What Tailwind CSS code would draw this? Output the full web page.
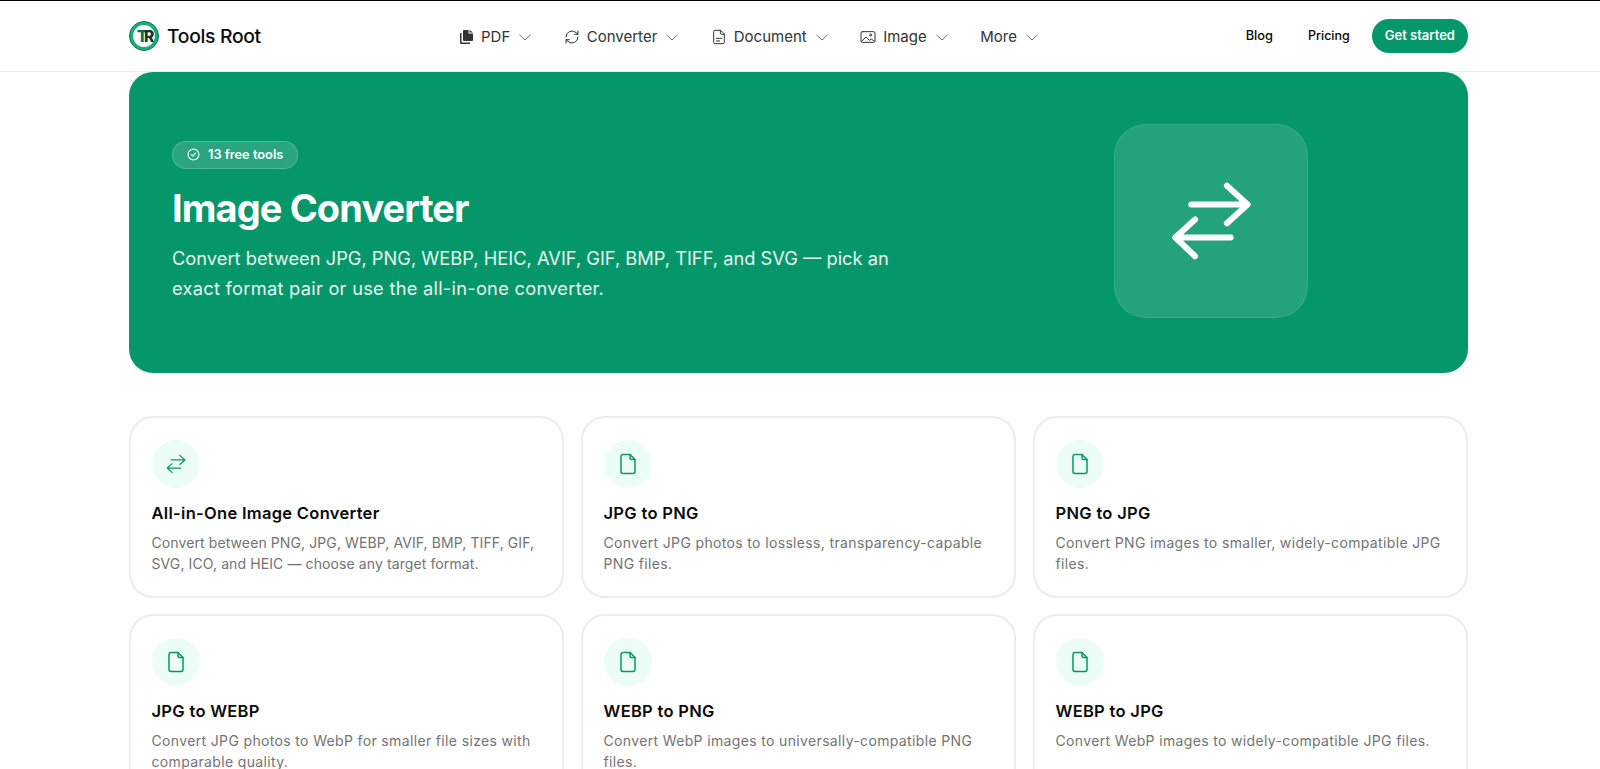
<!DOCTYPE html>
<html lang="en">
<head>
    <meta charset="UTF-8">
    <meta name="viewport" content="width=device-width, initial-scale=1.0">
    <title>Image Converter - Tools Root</title>
    <script src="https://cdn.jsdelivr.net/npm/@tailwindcss/browser@4"></script>
</head>
<body class="h-[769px] overflow-hidden bg-white font-['Inter',sans-serif] text-[#0a0a0a]">
    <header class="h-[72px] border-t border-b border-t-black border-b-[#ececec] pl-[129px] pr-[132px] flex items-center">
        <a class="flex items-center gap-[8px] w-[329px] shrink-0">
            <svg class="w-[30px] h-[30px]" viewBox="0 0 30 30">
                <circle cx="15" cy="15" r="12.600" fill="#fff" stroke="#16b07a" stroke-width="3.400"/>
                <circle cx="15" cy="15" r="14.500" fill="none" stroke="#0b6b4a" stroke-width="1"/>
                <text x="15" y="21" text-anchor="middle" font-family="Inter" font-weight="800" font-size="15.500" letter-spacing="-3.500"><tspan fill="#0f6b4c">T</tspan><tspan fill="#12352a">R</tspan></text>
            </svg>
            <span class="text-[19.300px] font-medium tracking-[-0.3px]">Tools Root</span>
        </a>
        <nav class="mt-[2px] flex items-center gap-[30.500px] text-[15px] text-[#333]">
            <a class="flex items-center gap-[7px]">
                <svg class="w-4 h-4" viewBox="0 0 16 16" fill="#333"><path d="M6 1h4.500v3.500H15V11a1 1 0 0 1-1 1H6a1 1 0 0 1-1-1V2a1 1 0 0 1 1-1z"/><path d="M11.500 1 15 3.500h-3.500z"/><path d="M2 4v9.500A1.500 1.500 0 0 0 3.500 15H12v-1.500H4a.5.5 0 0 1-.5-.5V4z"/></svg>
                <span>PDF</span>
                <svg class="w-4 h-4" viewBox="0 0 24 24" fill="none" stroke="#666" stroke-width="1.400" stroke-linecap="round" stroke-linejoin="round"><path d="m4 9 8 7.500L20 9"/></svg>
            </a>
            <a class="flex items-center gap-[7px]">
                <svg class="w-4 h-4" viewBox="0 0 24 24" fill="none" stroke="#333" stroke-width="1.500" stroke-linecap="round" stroke-linejoin="round"><path d="M3 12a9 9 0 0 1 15-6.700L21 8"/><path d="M21 3v5h-5"/><path d="M21 12a9 9 0 0 1-15 6.700L3 16"/><path d="M3 21v-5h5"/></svg>
                <span>Converter</span>
                <svg class="w-4 h-4" viewBox="0 0 24 24" fill="none" stroke="#666" stroke-width="1.400" stroke-linecap="round" stroke-linejoin="round"><path d="m4 9 8 7.500L20 9"/></svg>
            </a>
            <a class="flex items-center gap-[7px]">
                <svg class="w-4 h-4" viewBox="0 0 24 24" fill="none" stroke="#333" stroke-width="1.500" stroke-linecap="round" stroke-linejoin="round"><path d="M14 2H6a2 2 0 0 0-2 2v16a2 2 0 0 0 2 2h12a2 2 0 0 0 2-2V8z"/><path d="M14 2v4a2 2 0 0 0 2 2h4"/><path d="M8 14h8M8 18h5"/></svg>
                <span>Document</span>
                <svg class="w-4 h-4" viewBox="0 0 24 24" fill="none" stroke="#666" stroke-width="1.400" stroke-linecap="round" stroke-linejoin="round"><path d="m4 9 8 7.500L20 9"/></svg>
            </a>
            <a class="flex items-center gap-[7px]">
                <svg class="w-4 h-4" viewBox="0 0 24 24" fill="none" stroke="#333" stroke-width="1.500" stroke-linecap="round" stroke-linejoin="round"><rect x="1.500" y="4" width="21" height="16" rx="2"/><circle cx="16" cy="9" r="1.500"/><path d="m3 18 6-6 5 5 3-2 4 3"/></svg>
                <span>Image</span>
                <svg class="w-4 h-4" viewBox="0 0 24 24" fill="none" stroke="#666" stroke-width="1.400" stroke-linecap="round" stroke-linejoin="round"><path d="m4 9 8 7.500L20 9"/></svg>
            </a>
            <a class="flex items-center gap-[7px]">
                <span>More</span>
                <svg class="w-4 h-4" viewBox="0 0 24 24" fill="none" stroke="#666" stroke-width="1.400" stroke-linecap="round" stroke-linejoin="round"><path d="m4 9 8 7.500L20 9"/></svg>
            </a>
        </nav>
        <div class="ml-auto flex items-center gap-[22px] text-[13px] font-medium">
            <a class="pr-[13px] text-[12.800px]">Blog</a>
            <a class="text-[12.500px]">Pricing</a>
            <a class="h-[34px] px-[13px] rounded-full bg-[#059669] text-white font-semibold flex items-center">Get started</a>
        </div>
    </header>

    <main class="pl-[129px] pr-[132px]">
        <section class="h-[301px] rounded-[24px] bg-[#059669] text-white pl-[43px] pr-[160px] flex items-center justify-between">
            <div class="w-[760px] pb-[2px]">
                <span class="inline-flex items-center gap-[8px] h-[28px] px-[14px] rounded-full bg-white/15 border border-white/20 text-[12.800px] font-semibold">
                    <svg class="w-[13px] h-[13px]" viewBox="0 0 24 24" fill="none" stroke="#fff" stroke-width="2" stroke-linecap="round" stroke-linejoin="round"><circle cx="12" cy="12" r="10"/><path d="m8 12 3 3 5-6"/></svg>
                    13 free tools
                </span>
                <h1 class="mt-[15px] text-[38px] leading-[48px] font-bold tracking-[-0.9px]">Image Converter</h1>
                <p class="mt-[11px] text-[18.300px] leading-[30px] text-white/90">
                    <span class="block">Convert between JPG, PNG, WEBP, HEIC, AVIF, GIF, BMP, TIFF, and SVG — pick an</span>
                    <span class="block tracking-[0.25px]">exact format pair or use the all-in-one converter.</span>
                </p>
            </div>
            <div class="mb-[3px] w-[194px] h-[194px] rounded-[32px] bg-white/12 border border-white/10 flex items-center justify-center">
                <svg class="w-[90px] h-[90px]" viewBox="0 0 24 24" fill="none" stroke="#fff" stroke-width="1.600" stroke-linecap="round" stroke-linejoin="round"><path d="M6.750 7.600h15M16.250 2.600l5.500 5-5.500 5"/><path d="M17.250 16.400H2.500M7.750 11.600 2.500 16.400l5.250 5"/></svg>
            </div>
        </section>

        <section class="mt-[43px] grid grid-cols-3 gap-x-[17px] gap-y-[16px] text-[#737373]">
            <article class="h-[182px] rounded-[24px] border-2 border-[#ececec] pt-[21.500px] px-[20.500px]">
                <div class="w-[48px] h-[48px] rounded-full bg-[#ecfdf5] flex items-center justify-center">
                    <svg class="w-[22px] h-[22px]" viewBox="0 0 24 24" fill="none" stroke="#059669" stroke-width="1.300" stroke-linecap="round" stroke-linejoin="round"><path d="M6.750 7.600h15M16.250 2.600l5.500 5-5.500 5"/><path d="M17.250 16.400H2.500M7.750 11.600 2.500 16.400l5.250 5"/></svg>
                </div>
                <h3 class="mt-[13px] text-[16.500px] leading-[24px] font-semibold tracking-[0.3px] text-[#0a0a0a]">All-in-One Image Converter</h3>
                <p class="mt-[7px] text-[14px] leading-[21.500px] tracking-[0.1px]">Convert between PNG, JPG, WEBP, AVIF, BMP, TIFF, GIF, SVG, ICO, and HEIC — choose any target format.</p>
            </article>
            <article class="h-[182px] rounded-[24px] border-2 border-[#ececec] pt-[21.500px] px-[20.500px]">
                <div class="w-[48px] h-[48px] rounded-full bg-[#ecfdf5] flex items-center justify-center">
                    <svg class="w-6 h-6" viewBox="0 0 24 24" fill="none" stroke="#059669" stroke-width="1.500" stroke-linecap="round" stroke-linejoin="round"><path d="M14 2.500H7a2 2 0 0 0-2 2v15a2 2 0 0 0 2 2h10a2 2 0 0 0 2-2V7.500z"/><path d="M14 2.500V6a1.500 1.500 0 0 0 1.500 1.500H19"/></svg>
                </div>
                <h3 class="mt-[13px] text-[16.500px] leading-[24px] font-semibold tracking-[0.3px] text-[#0a0a0a]">JPG to PNG</h3>
                <p class="mt-[7px] text-[14px] leading-[21.500px] tracking-[0.35px]">Convert JPG photos to lossless, transparency-capable PNG files.</p>
            </article>
            <article class="h-[182px] rounded-[24px] border-2 border-[#ececec] pt-[21.500px] px-[20.500px]">
                <div class="w-[48px] h-[48px] rounded-full bg-[#ecfdf5] flex items-center justify-center">
                    <svg class="w-6 h-6" viewBox="0 0 24 24" fill="none" stroke="#059669" stroke-width="1.500" stroke-linecap="round" stroke-linejoin="round"><path d="M14 2.500H7a2 2 0 0 0-2 2v15a2 2 0 0 0 2 2h10a2 2 0 0 0 2-2V7.500z"/><path d="M14 2.500V6a1.500 1.500 0 0 0 1.500 1.500H19"/></svg>
                </div>
                <h3 class="mt-[13px] text-[16.500px] leading-[24px] font-semibold tracking-[0.3px] text-[#0a0a0a]">PNG to JPG</h3>
                <p class="mt-[7px] text-[14px] leading-[21.500px] tracking-[0.35px]">Convert PNG images to smaller, widely-compatible JPG files.</p>
            </article>
            <article class="h-[182px] rounded-[24px] border-2 border-[#ececec] pt-[21.500px] px-[20.500px]">
                <div class="w-[48px] h-[48px] rounded-full bg-[#ecfdf5] flex items-center justify-center">
                    <svg class="w-6 h-6" viewBox="0 0 24 24" fill="none" stroke="#059669" stroke-width="1.500" stroke-linecap="round" stroke-linejoin="round"><path d="M14 2.500H7a2 2 0 0 0-2 2v15a2 2 0 0 0 2 2h10a2 2 0 0 0 2-2V7.500z"/><path d="M14 2.500V6a1.500 1.500 0 0 0 1.500 1.500H19"/></svg>
                </div>
                <h3 class="mt-[13px] text-[16.500px] leading-[24px] font-semibold tracking-[0.3px] text-[#0a0a0a]">JPG to WEBP</h3>
                <p class="mt-[7px] text-[14px] leading-[21.500px] tracking-[0.35px]">Convert JPG photos to WebP for smaller file sizes with comparable quality.</p>
            </article>
            <article class="h-[182px] rounded-[24px] border-2 border-[#ececec] pt-[21.500px] px-[20.500px]">
                <div class="w-[48px] h-[48px] rounded-full bg-[#ecfdf5] flex items-center justify-center">
                    <svg class="w-6 h-6" viewBox="0 0 24 24" fill="none" stroke="#059669" stroke-width="1.500" stroke-linecap="round" stroke-linejoin="round"><path d="M14 2.500H7a2 2 0 0 0-2 2v15a2 2 0 0 0 2 2h10a2 2 0 0 0 2-2V7.500z"/><path d="M14 2.500V6a1.500 1.500 0 0 0 1.500 1.500H19"/></svg>
                </div>
                <h3 class="mt-[13px] text-[16.500px] leading-[24px] font-semibold tracking-[0.3px] text-[#0a0a0a]">WEBP to PNG</h3>
                <p class="mt-[7px] text-[14px] leading-[21.500px] tracking-[0.35px]">Convert WebP images to universally-compatible PNG files.</p>
            </article>
            <article class="h-[182px] rounded-[24px] border-2 border-[#ececec] pt-[21.500px] px-[20.500px]">
                <div class="w-[48px] h-[48px] rounded-full bg-[#ecfdf5] flex items-center justify-center">
                    <svg class="w-6 h-6" viewBox="0 0 24 24" fill="none" stroke="#059669" stroke-width="1.500" stroke-linecap="round" stroke-linejoin="round"><path d="M14 2.500H7a2 2 0 0 0-2 2v15a2 2 0 0 0 2 2h10a2 2 0 0 0 2-2V7.500z"/><path d="M14 2.500V6a1.500 1.500 0 0 0 1.500 1.500H19"/></svg>
                </div>
                <h3 class="mt-[13px] text-[16.500px] leading-[24px] font-semibold tracking-[0.3px] text-[#0a0a0a]">WEBP to JPG</h3>
                <p class="mt-[7px] text-[14px] leading-[21.500px] tracking-[0.35px]">Convert WebP images to widely-compatible JPG files.</p>
            </article>
        </section>
    </main>
</body>
</html>
